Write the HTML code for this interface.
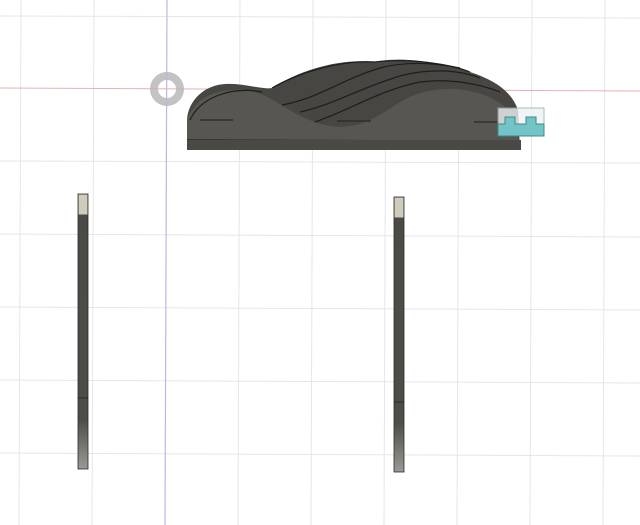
<!DOCTYPE html>
<html><head><meta charset="utf-8"><style>
html,body{margin:0;padding:0;background:#fff;width:640px;height:525px;overflow:hidden}
</style></head><body>
<svg width="640" height="525" viewBox="0 0 640 525" xmlns="http://www.w3.org/2000/svg">
<defs>
<linearGradient id="bar" x1="0" y1="0" x2="0" y2="1">
<stop offset="0" stop-color="#4a4a46"/><stop offset="0.82" stop-color="#4d4d49"/><stop offset="1" stop-color="#9a9a94"/>
</linearGradient>
</defs>
<g stroke="#e6e6ea" stroke-width="1">
<line x1="21" y1="0" x2="19" y2="525"/>
<line x1="94" y1="0" x2="92" y2="525"/>
<line x1="240" y1="0" x2="238" y2="525"/>
<line x1="313" y1="0" x2="311" y2="525"/>
<line x1="386" y1="0" x2="384" y2="525"/>
<line x1="459" y1="0" x2="457" y2="525"/>
<line x1="532" y1="0" x2="530" y2="525"/>
<line x1="605" y1="0" x2="603" y2="525"/>
<line x1="0" y1="16" x2="640" y2="18"/>
<line x1="0" y1="161" x2="640" y2="163"/>
<line x1="0" y1="234" x2="640" y2="237"/>
<line x1="0" y1="307" x2="640" y2="310"/>
<line x1="0" y1="380" x2="640" y2="383"/>
<line x1="0" y1="453" x2="640" y2="456"/>
</g>
<line x1="167" y1="0" x2="165" y2="525" stroke="#b8b8e6" stroke-width="1.2"/>
<line x1="0" y1="88" x2="640" y2="91" stroke="#eab0b0" stroke-width="1"/>
<circle cx="167" cy="89" r="13" fill="none" stroke="#b8b8b8" stroke-width="8" opacity="0.85"/>
<path d="M187 148 L187 120 C188 100 205 85 225 84 C245 83 262 90 272 88 C300 70 340 58 375 62 C400 56 440 62 470 72 C495 80 512 92 518 110 L520 150 Z" fill="#474643"/>
<path d="M187 120 C195 98 215 88 245 90 C275 95 285 112 315 122 C350 134 370 122 400 102 C430 84 470 86 495 100 C508 108 514 114 518 118 L518 140 L187 140 Z" fill="#575651"/>
<g fill="none" stroke="#1e1e1c" stroke-width="1.2">
<path d="M190 120 C200 98 230 86 262 92"/>
<path d="M272 88 C300 72 340 60 375 62 C410 58 450 64 470 72"/>
<path d="M282 105 C320 98 340 80 380 68 C410 60 440 64 460 68"/>
<path d="M300 112 C330 106 360 88 400 76 C430 68 460 70 480 78"/>
<path d="M315 122 C350 110 380 90 420 82 C450 78 480 84 500 92"/>
<path d="M187 140 L520 141"/>
</g>
<rect x="187" y="140" width="334" height="10" fill="#4a4946"/>
<g stroke="#2a2a28" stroke-width="1.3">
<line x1="200" y1="120" x2="233" y2="120"/>
<line x1="337" y1="121" x2="371" y2="121"/>
<line x1="474" y1="122" x2="500" y2="122"/>
</g>
<rect x="498" y="108" width="46" height="28" fill="#eef2f2" stroke="#9aa" stroke-width="1" opacity="0.8"/>
<path d="M498 136 L498 124 L505 124 L505 117 L515 117 L515 124 L526 124 L526 117 L536 117 L536 124 L544 124 L544 136 Z" fill="#72c4c6" stroke="#3e8a8c" stroke-width="1"/>
<rect x="78" y="194" width="10" height="275" fill="url(#bar)" stroke="#2a2a28" stroke-width="0.8"/>
<rect x="78.5" y="194.5" width="9" height="20" fill="#cfcbbd"/>
<line x1="78" y1="398" x2="88" y2="398" stroke="#222" stroke-width="0.8"/>
<rect x="394" y="197" width="10" height="275" fill="url(#bar)" stroke="#2a2a28" stroke-width="0.8"/>
<rect x="394.5" y="197.5" width="9" height="20" fill="#cfcbbd"/>
<line x1="394" y1="402" x2="404" y2="402" stroke="#222" stroke-width="0.8"/>
</svg>
</body></html>
